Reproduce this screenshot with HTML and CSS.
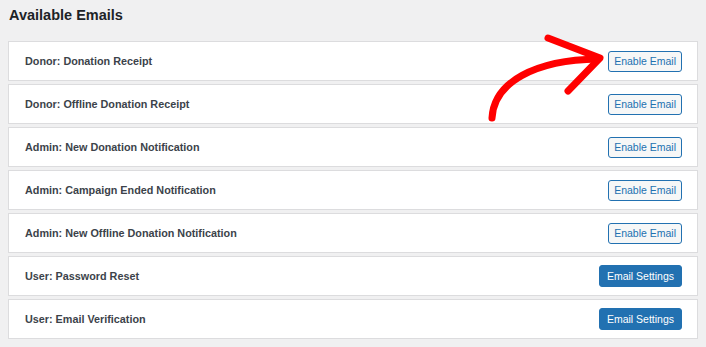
FILE: index.html
```html
<!DOCTYPE html>
<html>
  <head>
    <title>Available Emails</title>
    <link rel="stylesheet" href="styles.css">
  </head>
  <body>
    <h2 class="section-title">Available Emails</h2>
    <div class="email-list">
      <div class="email-row">
        <span class="email-name">Donor: Donation Receipt</span>
        <button class="btn btn-secondary">Enable Email</button>
      </div>
      <div class="email-row">
        <span class="email-name">Donor: Offline Donation Receipt</span>
        <button class="btn btn-secondary">Enable Email</button>
      </div>
      <div class="email-row">
        <span class="email-name">Admin: New Donation Notification</span>
        <button class="btn btn-secondary">Enable Email</button>
      </div>
      <div class="email-row">
        <span class="email-name">Admin: Campaign Ended Notification</span>
        <button class="btn btn-secondary">Enable Email</button>
      </div>
      <div class="email-row">
        <span class="email-name">Admin: New Offline Donation Notification</span>
        <button class="btn btn-secondary">Enable Email</button>
      </div>
      <div class="email-row">
        <span class="email-name">User: Password Reset</span>
        <button class="btn btn-primary">Email Settings</button>
      </div>
      <div class="email-row">
        <span class="email-name">User: Email Verification</span>
        <button class="btn btn-primary">Email Settings</button>
      </div>
    </div>

    <!-- hand-drawn arrow pointing at the first button -->
    <svg class="arrow" width="706" height="347" viewBox="0 0 706 347">
      <path d="M492 118 C494 82 535 60 598 59" />
      <path d="M548 38 L600 58 L568 91" />
    </svg>
  </body>
</html>
```

FILE: styles.css
```css
body {
  margin: 0;
  padding: 0 8px;
  background-color: #f0f0f1;
  font-family: "Liberation Sans", Arial, sans-serif;
  color: #3c434a;
  position: relative;
}
.section-title {
  margin: 0;
  padding: 7px 0 0 1px;
  height: 41px;
  box-sizing: border-box;
  font-size: 14.5px;
  font-weight: bold;
  color: #1d2327;
}
.email-list {
  display: flex;
  flex-direction: column;
  gap: 3px;
}
.email-row {
  display: flex;
  align-items: center;
  justify-content: space-between;
  height: 40px;
  box-sizing: border-box;
  padding: 0 15px 0 16px;
  background-color: #fff;
  border: 1px solid #dcdcde;
}
.email-name {
  font-size: 10.8px;
  font-weight: bold;
  color: #3c434a;
}
.btn {
  font-family: "Liberation Sans", Arial, sans-serif;
  font-size: 10.5px;
  border-radius: 3px;
  height: 22px;
  cursor: pointer;
}
.btn-secondary {
  padding: 0 5px;
  height: 21px;
  background-color: #f6f7f7;
  border: 1px solid #2271b1;
  color: #2271b1;
}
.btn-primary {
  padding: 0 7px;
  background-color: #2271b1;
  border: 1px solid #2271b1;
  color: #fff;
}
.arrow {
  position: absolute;
  top: 0;
  left: 0;
  pointer-events: none;
}
.arrow path {
  fill: none;
  stroke: #ff0000;
  stroke-width: 7;
  stroke-linecap: round;
  stroke-linejoin: round;
}
```
